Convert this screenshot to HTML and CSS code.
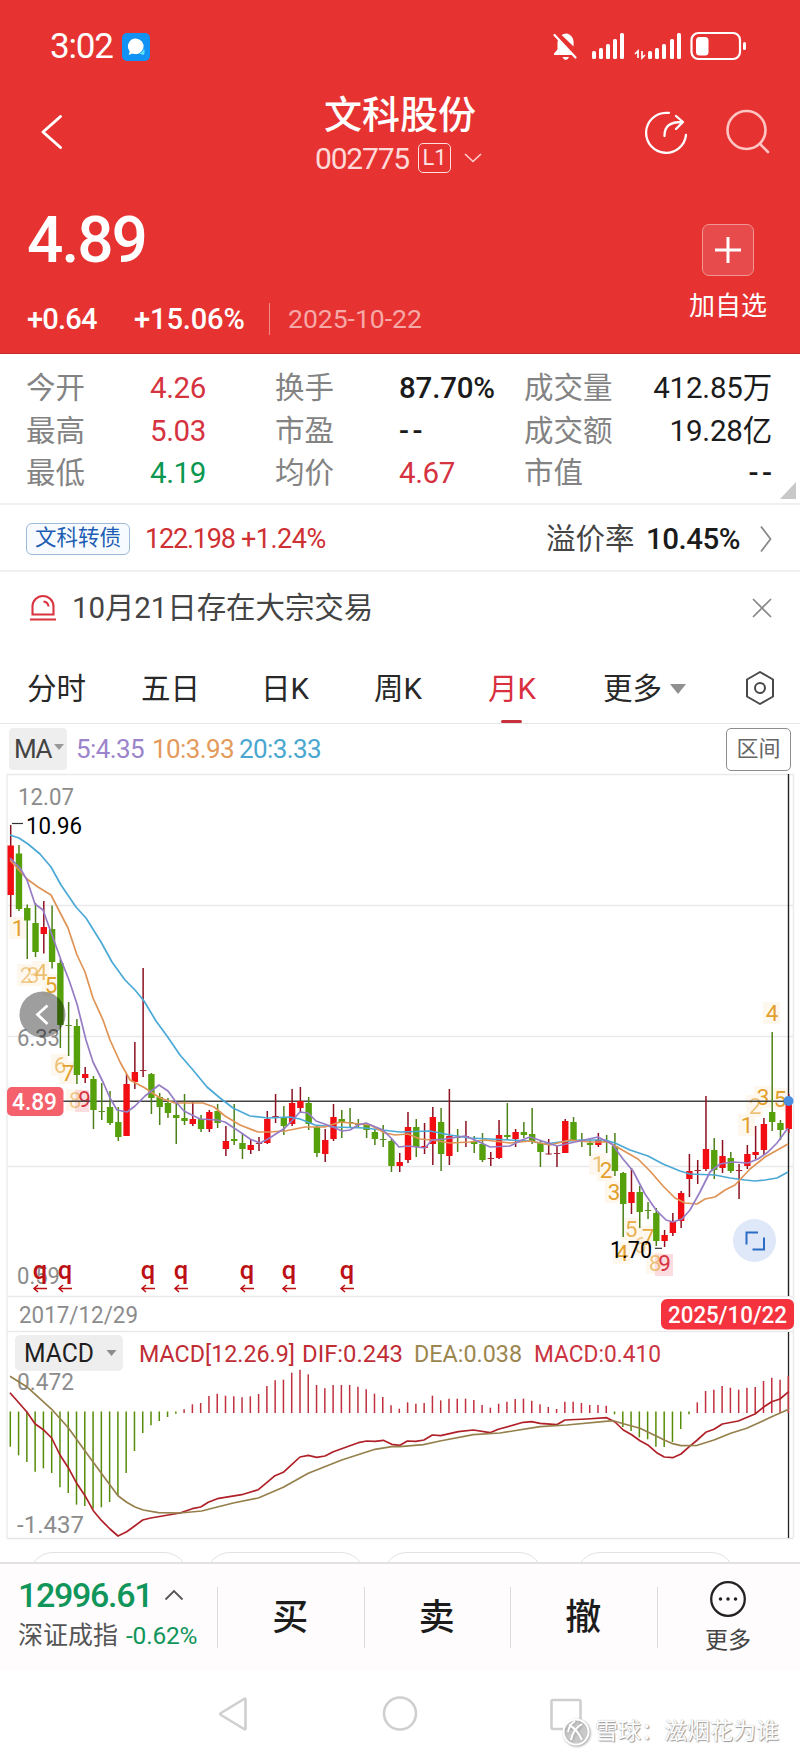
FILE: index.html
```html
<!DOCTYPE html>
<html lang="zh-CN">
<head>
<meta charset="utf-8">
<title>文科股份 002775</title>
<link rel="stylesheet" href="styles.css">
</head>
<body>
<header class="hero">
  <div class="status">
    <span class="clock">3:02</span>
    <svg class="msg" width="28" height="28" viewBox="0 0 28 28"><rect width="28" height="28" rx="5" fill="#1292f5"/><path d="M14 5.500a8 7.800 0 1 1-3.500 15l-3.800 1.500 1-3.800A8 7.800 0 0 1 14 5.500z" fill="#fff"/><path d="M17 20.500q4-1 5-5 1.500 4-.5 6.500z" fill="#5fe0f4"/></svg>
    <svg class="sysicons" width="200" height="32" viewBox="550 30 200 32" fill="#fff">
      <path d="M566 33.500c5 .6 7.600 4.500 7.600 9v4l-12-11.500a9 9 0 0 1 4.400-1.500zM558 39.500l16.500 15.500H554v-1.500l3.500-4v-7zM562.500 57h6.500q-1 3-3.200 3t-3.300-3z"/>
      <path d="M554.500 35l21 22.500" stroke="#fff" stroke-width="2.200" stroke-linecap="round"/>
      <g><rect x="592" y="51" width="4" height="8" rx="1.500"/><rect x="599" y="48" width="4" height="11" rx="1.500"/><rect x="606" y="44" width="4" height="15" rx="1.500"/><rect x="613" y="39" width="4" height="20" rx="1.500"/><rect x="620" y="33" width="4" height="26" rx="1.500"/></g>
      <path d="M638 58v-7l-3 3M642 51v7l3-3" fill="none" stroke="#fff" stroke-width="1.700"/>
      <g><rect x="648" y="51" width="4" height="8" rx="1.500"/><rect x="655" y="48" width="4" height="11" rx="1.500"/><rect x="662" y="44" width="4" height="15" rx="1.500"/><rect x="670" y="39" width="4" height="20" rx="1.500"/><rect x="677" y="33" width="4" height="26" rx="1.500"/></g>
      <rect x="691.500" y="33" width="48.500" height="26" rx="7" fill="none" stroke="#fff" stroke-width="2.200"/>
      <rect x="696" y="37" width="12.500" height="18.500" rx="3.500"/><rect x="743" y="42" width="3" height="8" rx="1.500"/>
    </svg>
  </div>
  <div class="titlebar">
    <svg width="30" height="40" viewBox="0 0 30 40" class="back"><path d="M22.500 4.500L5 20l17.500 15.500" /></svg>
    <div class="name">
      <h1>文科股份</h1>
      <div class="code"><span>002775</span><b>L1</b><svg width="20" height="12" viewBox="0 0 20 12"><path d="M2 2l8 7.500L18 2"/></svg></div>
    </div>
    <svg class="share" width="46" height="46" viewBox="643 109 46 46"><path d="M669 112.800h-3a20 20 0 1 0 20 22"/><path d="M664.500 136c0-10 5-14 18-14M676 116l7 6-7 7"/></svg>
    <svg class="search" width="46" height="46" viewBox="725 109 46 46"><circle cx="746.500" cy="130" r="19"/><path d="M760 144l8 8"/></svg>
  </div>
  <div class="quote">
    <div class="nums">
      <div class="price">4.89</div>
      <div class="change"><span class="c1">+0.64</span><span class="c2">+15.06%</span><span class="date">2025-10-22</span></div>
    </div>
    <div class="add"><i><svg width="28" height="28" viewBox="0 0 28 28"><path d="M1 14h26M14 1v26"/></svg></i><span>加自选</span></div>
  </div>
</header>

<section class="stats">
  <span>今开</span><b class="up">4.26</b><span>换手</span><b>87.70%</b><span>成交量</span><b class="r">412.85万</b>
  <span>最高</span><b class="up">5.03</b><span>市盈</span><b class="nil">--</b><span>成交额</span><b class="r">19.28亿</b>
  <span>最低</span><b class="down">4.19</b><span>均价</span><b class="up">4.67</b><span>市值</span><b class="r nil">--</b>
  <i class="corner"></i>
</section>

<section class="bond">
  <span class="tag">文科转债</span><span class="bp">122.198</span><span class="bc">+1.24%</span>
  <span class="prem">溢价率</span><b>10.45%</b>
  <svg width="14" height="30" viewBox="0 0 14 30"><path d="M2 2.500L11.500 15 2 27.500"/></svg>
</section>

<section class="notice">
  <svg width="28" height="28" viewBox="0 0 28 28" fill="none" stroke="#d9343f" stroke-width="2.100"><path d="M3.500 20.500V12.500a10.500 10.500 0 0 1 21 0v8zM1 25.500h26M14.500 7.500q4.500.5 5 5"/></svg>
  <span>10月21日存在大宗交易</span>
  <svg class="x" width="22" height="22" viewBox="0 0 22 22"><path d="M2 2l18 18M20 2L2 20"/></svg>
</section>

<nav class="tabs">
  <span>分时</span><span>五日</span><span>日K</span><span>周K</span><span class="on">月K</span><span class="more">更多<i></i></span>
  <svg width="32" height="36" viewBox="0 0 32 36"><path d="M16 2l13 7.500v17L16 34 3 26.500v-17z"/><circle cx="16" cy="18" r="5"/></svg>
</nav>

<section class="ma">
  <span class="sel">MA<i></i></span><span class="m5">5:4.35</span><span class="m10">10:3.93</span><span class="m20">20:3.33</span><span class="range">区间</span>
</section>

<svg id="kline" class="chart" width="800" height="558" viewBox="0 774 800 558"></svg>
<svg id="macd" class="chart" width="800" height="212" viewBox="0 1332 800 212"></svg>

<div class="chips"><i></i><i></i><i></i><i></i></div>

<footer class="trade">
  <div class="index">
    <div class="iv">12996.61<svg width="20" height="12" viewBox="0 0 20 12"><path d="M1.500 10.500L10 2l8.500 8.500"/></svg></div>
    <div class="in">深证成指<span>-0.62%</span></div>
  </div>
  <div class="act">买</div><div class="act">卖</div><div class="act">撤</div>
  <div class="act other"><svg width="38" height="38" viewBox="0 0 38 38"><circle cx="19" cy="19" r="16.800"/><path d="M11.500 19h.01M19 19h.01M26.500 19h.01"/></svg><span>更多</span></div>
</footer>

<div class="sysnav">
  <svg width="400" height="44" viewBox="200 1692 400 44"><path d="M245.500 1699.500v29q0 1.500-1.500.5l-23-14q-1.500-1 0-2l23-14q1.500-1 1.500.5z"/><circle cx="400" cy="1713.500" r="16"/><rect x="551.500" y="1700" width="29" height="29" rx="1.500"/></svg>
  <div class="mark"><svg width="28" height="28" viewBox="0 0 28 28"><circle cx="14" cy="14" r="12.500"/><path d="M7 7q8 4 13 15M20 6q-9 5-11 16M13 3q-6 4-7 11"/></svg><span>雪球：滋烟花为谁</span></div>
</div>
<script src="chart.js"></script>
</body>
</html>
```
FILE: styles.css
```css
* { box-sizing: border-box; }
body { margin: 0; width: 800px; height: 1758px; overflow: hidden; background: #fff; color: #222; font-family: Roboto, "Noto Sans CJK SC", sans-serif; }
h1, b, i { margin: 0; font-weight: 400; font-style: normal; }
svg { display: block; flex: none; fill: none; }

.hero { height: 354px; background: #e63332; color: #fff; border-bottom: 1px solid #c22a2d; }
.status { display: flex; align-items: center; height: 92px; padding: 0 50px 0 50px; }
.clock { font-size: 35px; line-height: 40px; letter-spacing: -1.2px; width: 72px; padding-top: 2px; }
.msg { margin-top: 1px; }
.sysicons { margin-left: auto; fill: #fff; }
.titlebar { display: flex; height: 90px; padding-left: 38px; }
.back { margin-top: 20px; stroke: #fff; stroke-width: 3; stroke-linecap: round; stroke-linejoin: round; }
.name { margin-left: 247px; width: 200px; padding-top: 2px; }
h1 { margin-left: 9px; font-size: 38px; line-height: 42px; font-weight: 500; }
.code { display: flex; align-items: center; height: 44px; color: #ffd9d8; font-size: 30px; letter-spacing: -1.200px; }
.code span { width: 103px; line-height: 36px; padding-top: 1px; }
.code b { width: 33px; height: 30px; border: 1.500px solid #ffdedd; border-radius: 5px; font-size: 22px; line-height: 28px; text-align: center; color: #ffe5e4; letter-spacing: 0; }
.code svg { margin-left: 12px; stroke: #ffd0cf; stroke-width: 1.600; }
.share { margin: 17px 0 0 128px; stroke: #fff; stroke-width: 2.300; stroke-linecap: round; stroke-linejoin: round; }
.search { margin: 17px 0 0 36px; stroke: #ffc5c3; stroke-width: 2.600; stroke-linecap: round; }
.quote { display: flex; height: 171px; padding-left: 27px; }
.nums { width: 653px; }
.price { height: 114px; font-size: 64px; line-height: 117px; font-weight: 500; letter-spacing: -2px; }
.change { display: flex; align-items: center; height: 45px; font-size: 29px; letter-spacing: -.4px; }
.c1 { width: 107px; font-weight: 500; letter-spacing: -.8px; }
.c2 { width: 136px; height: 32px; line-height: 33px; border-right: 1.500px solid #f08a88; letter-spacing: -.1px; font-weight: 500; }
.date { margin-left: 18px; color: #f7a9a7; font-size: 26.500px; letter-spacing: 0; }
.add { width: 96px; display: flex; flex-direction: column; align-items: center; padding-top: 42px; }
.add i { width: 52px; height: 52px; border: 1.500px solid #f29593; border-radius: 7px; background: #e84b4b; display: grid; place-items: center; }
.add svg { stroke: #fff; stroke-width: 3; }
.add span { font-size: 26px; line-height: 36px; margin-top: 12px; }

.stats { position: relative; height: 151px; display: grid; grid-template-columns: 124px 125px 124px 125px 100px 148px; grid-auto-rows: 42.700px; padding: 13px 27px 0 26px; line-height: 42.700px; font-size: 29.500px; border-bottom: 2px solid #eeeff1; }
.stats span { color: #838383; white-space: nowrap; }
.stats b { color: #1b1b1b; letter-spacing: -.2px; white-space: nowrap; font-weight: 500; }
.stats .up { color: #d5333f; font-weight: 400; letter-spacing: -.4px; }
.stats .down { color: #0a9750; font-weight: 400; letter-spacing: -.4px; }
.stats .r { text-align: right; font-weight: 400; }
.stats .nil { letter-spacing: 3.500px; font-weight: 500; }
.stats .r.nil { margin-right: -3.500px; }
.corner { position: absolute; right: 4px; bottom: 4px; border-left: 16px solid transparent; border-bottom: 17px solid #c8c8c8; }

.bond { display: flex; align-items: center; height: 67px; padding: 3px 27px 0 26px; border-bottom: 2px solid #f0f0f2; }
.tag { width: 104px; height: 32px; border: 1.500px solid #9db9d8; border-radius: 6px; background: #f7fbff; color: #1d5eb4; font-size: 21.500px; line-height: 28px; text-align: center; }
.bp, .bc { color: #cf3033; font-size: 27px; letter-spacing: -1.200px; }
.bp { width: 96px; margin-left: 15px; }
.bc { letter-spacing: -.5px; }
.prem { margin-left: auto; width: 100px; color: #444; font-size: 29.500px; line-height: 40px; }
.bond b { width: 113px; font-size: 29.500px; letter-spacing: -.5px; color: #1b1b1b; font-weight: 500; }
.bond svg { stroke: #8a8a8a; stroke-width: 1.800; }

.notice { display: flex; align-items: center; height: 71px; padding: 0 27px 0 29px; color: #444; font-size: 29.500px; line-height: 40px; }
.notice span { margin-left: 15px; letter-spacing: -.1px; }
.x { margin-left: auto; stroke: #888; stroke-width: 1.700; }

.tabs { height: 81px; display: grid; grid-template-columns: 114px 120px 113px 114px 115px 141px 40px; padding: 15px 0 0 27px; font-size: 29.500px; line-height: 62px; border-bottom: 1.500px solid #e6e6e6; color: #282828; }
.on { color: #d92f3f; position: relative; }
.on::after { content: ""; position: absolute; left: 13px; bottom: 0; width: 21px; height: 3px; border-radius: 2px; background: #c9303d; }
.more i { display: inline-block; margin: 0 0 5px 8px; border: 8px solid transparent; border-top: 10px solid #909090; border-bottom: 0; }
.tabs svg { margin-top: 12px; stroke: #484848; stroke-width: 2; stroke-linejoin: round; }

.ma { height: 50px; display: flex; align-items: center; padding: 0 9px 0 9px; font-size: 26px; letter-spacing: -.6px; }
.sel { width: 58px; height: 42px; padding-left: 5px; background: #eee; border-radius: 4px; color: #444; line-height: 43px; white-space: nowrap; letter-spacing: -1.500px; }
.sel i { display: inline-block; margin: 0 0 8px 3px; border: 5px solid transparent; border-top: 6px solid #999; border-bottom: 0; }
.m5 { width: 76px; margin-left: 9px; color: #9b84cb; letter-spacing: -.6px; }
.m10 { width: 87px; color: #e49a5b; }
.m20 { color: #49a7cf; }
.range { margin-left: auto; width: 65px; height: 43px; border: 1.500px solid #8d8d8d; border-radius: 5px; text-align: center; line-height: 40px; font-size: 22px; color: #666; letter-spacing: 0; }
.chart { overflow: visible; }

.chips { height: 18px; padding: 8px 64px 0 29px; display: grid; grid-template-columns: 159px 159px 160px 159px; column-gap: 18px; overflow: hidden; }
.chips i { height: 48px; border: 1.500px solid #e1e2e5; border-radius: 24px; }
.chips i:last-child { margin-left: 15px; margin-right: -15px; }

.trade { height: 108px; display: flex; background: #fefcfd; border-top: 2px solid #e2e2e4; }
.index { width: 217px; padding: 9px 0 0 18px; }
.iv { display: flex; align-items: center; gap: 12px; height: 44px; font-size: 34px; font-weight: 500; letter-spacing: -1.300px; color: #10955a; }
.iv svg { stroke: #555; stroke-width: 1.800; }
.in { display: flex; align-items: center; font-size: 25px; line-height: 36px; color: #555; margin-top: 1px; white-space: nowrap; }
.in span { margin-left: 8px; font-size: 24.500px; letter-spacing: -.2px; color: #10955a; }
.act { position: relative; width: 146.500px; height: 104px; text-align: center; font-size: 36px; font-weight: 500; line-height: 108px; color: #1c1c1c; }
.act::before { content: ""; position: absolute; left: 0; top: 23px; height: 61px; border-left: 1.500px solid #dcdcde; }
.other { width: 143px; display: flex; flex-direction: column; align-items: center; padding-top: 16px; font-size: 23px; line-height: 36px; font-weight: 400; color: #444; }
.other svg { stroke: #222; stroke-width: 2.300; }
.other path { stroke-width: 3.500; stroke-linecap: round; }
.other span { margin-top: 5px; }

.sysnav { position: relative; height: 86px; padding: 20px 0 0 200px; margin-top: 2px; }
.sysnav > svg { stroke: #cfcfcf; stroke-width: 2.600; }
.mark { position: absolute; left: 562px; top: 44px; display: flex; align-items: center; gap: 5px; color: #fff; font-size: 23px; line-height: 32px; white-space: nowrap; text-shadow: 1px 1px 1px #999, 0 0 1px #aaa; }
.mark svg { stroke: #fff; stroke-width: 2; filter: drop-shadow(1px 1px 1px #999); fill: rgba(190,190,190,.45); }
```
FILE: chart.js
```js
const NS = 'http://www.w3.org/2000/svg';
const px = i => 10.7 + 8.277 * i;

function add(parent, tag, attrs, text) {
  const e = document.createElementNS(NS, tag);
  for (const k in attrs) e.setAttribute(k, attrs[k]);
  if (text !== undefined) e.textContent = text;
  parent.appendChild(e);
  return e;
}
const line = (p, x1, y1, x2, y2, c, w = 1.5) => add(p, 'path', { d: `M${x1} ${y1}L${x2} ${y2}`, stroke: c, 'stroke-width': w });
const rect = (p, x, y, w, h, c, r = 0) => add(p, 'rect', { x, y, width: w, height: h, fill: c, rx: r });
const label = (p, s, x, y, w, c, size = 23.5, weight = 400) =>
  add(p, 'text', { x, y, fill: c, 'font-size': size, 'font-weight': weight, textLength: w, lengthAdjust: 'spacingAndGlyphs' }, s);
const curve = (p, pts, c) => add(p, 'polyline', { points: pts, stroke: c, 'stroke-width': 1.7, 'stroke-linejoin': 'round' });

/* colour, high, body top, body bottom, low */
const candles = `r 825 845.5 895 917|g 845 853.5 909 911|g 904.5 908 920.5 959|g 903 923 952 957|r 901 927 934 953.5|g 905.5 929 962 968.5|g 959 963 1025 1048|g 1002 1025 1026 1056|g 1019 1026 1075 1084|r 1067 1074 1078 1083|g 1076 1079 1110 1129|g 1083 1111 1112 1120|g 1091 1107 1123 1125|g 1107 1122 1137 1141|r 1074 1084 1136 1136|r 1042 1072 1082 1089|r 968 1070 1071 1077|g 1073 1074 1098 1114|g 1093 1097 1107 1125|g 1098 1103 1113 1118|g 1103 1115 1118 1144|g 1094 1118 1121 1125|r 1102 1119 1124 1126|g 1115 1119 1129 1132|r 1110 1112 1129 1132|g 1104 1111 1123 1128|r 1126 1141 1149 1156|g 1104 1139 1141 1145|g 1133 1143 1149 1159|r 1140 1145 1150 1154|r 1137 1143 1144 1151|r 1111 1119 1143 1144|r 1094 1116 1117 1123|g 1106 1117 1126 1135|r 1089 1103 1124 1126|r 1087 1101 1108 1112|g 1097 1103 1124 1130|g 1125 1127 1153 1157|r 1129 1140 1154 1162|r 1104 1117 1139 1141|g 1110 1119 1122 1138|g 1108 1122 1123 1127|g 1119 1124 1125 1128|g 1124 1125 1130 1138|g 1129 1132 1139 1145|g 1125 1139 1140 1147|g 1139 1141 1166 1172|r 1153 1162 1166 1172|r 1112 1127 1160 1163|g 1119 1127 1147 1157|r 1123 1146 1148 1154|r 1107 1117 1144 1165|g 1108 1122 1154 1171|r 1089 1136 1156 1165|g 1129 1137 1138 1152|r 1121 1136 1137 1147|g 1136 1142 1144 1153|g 1133 1144 1160 1162|r 1152 1158 1159 1166|r 1120 1135 1158 1159|g 1103 1135 1137 1140|r 1129 1132 1139 1147|g 1122 1132 1135 1138|g 1108 1134 1142 1144|g 1141 1143 1152 1167|r 1139 1153.5 1154.5 1154.5|r 1146 1153 1154 1167|r 1119 1121 1153 1153|g 1117 1122 1140 1141|g 1133 1140 1141 1147|g 1140 1143 1145 1156|r 1133 1140 1145 1147|g 1135 1141 1142 1153|g 1133 1146 1171 1176|g 1172 1173 1204 1237|r 1168 1192 1203 1214|g 1186 1192 1212 1228|g 1202 1210 1211 1219|g 1208 1213 1241 1246|r 1230 1235 1241 1247|r 1213 1222 1233 1236|r 1191 1193 1221 1228|r 1154 1171 1179 1197|r 1160 1170 1171 1184|r 1096 1149 1169 1171|g 1138 1150 1170 1179|r 1140 1156 1168 1173|g 1152 1158 1171 1173|r 1164 1170 1171 1199|r 1145 1154 1166 1169|r 1126 1152 1155 1159|r 1118 1124 1150 1155|g 1032 1112 1122 1131|g 1120 1123 1130 1140|r 1094 1101 1129 1133`.split('|').map(s => s.split(' '));

const ma20 = '10,835 19,838 28,844 40,854 51,867 61,885 76,907 86,918 101,942 112,962 125,980 135,990 144,1001 156,1021 167,1036 180,1055 193,1070 207,1087 220,1098 233,1108 250,1116 268,1118 290,1117 300,1119 315,1125 335,1127 365,1128 382,1130 400,1132 430,1131 450,1135 470,1138 490,1139 510,1140 530,1141 545,1144 560,1142 580,1140 605,1140 615,1143 630,1150 648,1156 663,1164 680,1171 690,1174 715,1175 730,1178 745,1180 755,1181 765,1180 777,1178 788,1172';
const ma10 = '10,860 27,879 38,887 51,895 68,928 77,955 85,972 93,998 103,1020 110,1040 120,1062 130,1080 145,1088 160,1098 175,1103 203,1103 214,1107 225,1116 240,1125 258,1132 268,1132 285,1131 305,1127 325,1127 340,1122 360,1124 370,1125 385,1133 395,1135 408,1134 420,1139 432,1140 450,1143 470,1142 485,1140 510,1143 530,1141 550,1145 570,1140 590,1142 608,1142 617,1147 638,1159 650,1171 663,1186 675,1198 685,1203 697,1204 705,1199 715,1197 725,1190 735,1185 750,1169 765,1157 788,1144';
const ma5 = '10,858 20,868 27,880 35,904 43,910 52,935 61,960 69,980 77,1004 86,1040 93,1062 103,1082 110,1098 117,1110 127,1112 135,1106 145,1096 159,1085 168,1091 176,1102 184,1111 200,1119 217,1120 225,1122 243,1134 250,1139 260,1143 268,1139 285,1128 300,1112 308,1113 316,1121 333,1127 342,1131 350,1130 358,1125 366,1123 383,1130 392,1139 399,1147 408,1146 425,1148 432,1140 445,1139 465,1136 475,1140 490,1147 510,1146 522,1140 530,1137 545,1142 557,1146 575,1142 598,1137 612,1144 623,1159 633,1171 645,1194 656,1210 666,1220 673,1222 682,1219 690,1210 700,1192 710,1172 720,1164 732,1162 748,1163 758,1159 768,1152 777,1143 788,1128';

const k = document.getElementById('kline');
for (const y of [774.5, 905.5, 1036.5, 1166.5, 1296.5]) line(k, 7, y, 793, y, '#e9e9eb');
line(k, 7, 774, 7, 1538, '#ececef');
line(k, 793.5, 774, 793.5, 1538, '#ececef');
label(k, '12.07', 18, 805, 56, '#8c8c8c');
label(k, '6.33', 17, 1046, 43, '#8c8c8c');
label(k, '0.59', 17, 1284, 43, '#8c8c8c');

/* sequence counters: digit, centre x, baseline, opacity */
const counts = [[1, 18, 936, 1], [2, 26, 983, .5], [3, 33, 983, .5], [4, 41, 980, .65], [5, 51, 993, 1], [6, 60, 1073, .6], [7, 68, 1081, 1], [8, 75, 1108, .5], [1, 598, 1172, .65], [2, 606, 1178, 1], [3, 614, 1200, 1], [4, 622, 1261, 1], [5, 631, 1237, .8], [6, 640, 1253, .5], [7, 648, 1245, .9], [8, 655, 1271, .6], [1, 747, 1133, 1], [2, 755, 1114, .6], [3, 763, 1105, 1], [4, 772, 1021, 1], [5, 780, 1107, 1]];
for (const [, x, y] of counts) rect(k, x - 9, y - 19, 17, 22, '#fef7ee');
rect(k, 75, 1090, 14, 22, '#fbdcdf');
rect(k, 655, 1254, 18, 22, '#fbdcdf');
for (const [n, x, y, o] of counts) add(k, 'text', { x, y, fill: '#e3a02c', 'font-size': 22.5, 'text-anchor': 'middle', opacity: o }, n);
for (const [x, y] of [[84.5, 1107], [664.5, 1271]]) add(k, 'text', { x, y, fill: '#d6353f', 'font-size': 22.5, 'text-anchor': 'middle' }, 9);

line(k, 7, 1101.3, 789, 1101.3, '#444', 1.4);
line(k, 788.5, 774, 788.5, 1296, '#222', 1.4);
candles.forEach(([c, h, t, b, l], i) => {
  const x = px(i), flat = b - t < 1.5;
  line(k, x, h, x, l, c === 'r' ? '#8c1020' : '#4c8118', 1.5);
  rect(k, x - 3.2, t, 6.4, Math.max(b - t, 1), flat ? (c === 'r' ? '#a52a35' : '#5b8f2a') : (c === 'r' ? '#f20d12' : '#56a00c'));
});
curve(k, ma20, '#4ba9d6');
curve(k, ma10, '#df9456');
curve(k, ma5, '#967cc5');

line(k, 12, 823.5, 23, 823.5, '#333', 1.2);
label(k, '10.96', 26, 833.5, 56, '#000', 24);
label(k, '1.70', 610, 1258, 42, '#000', 24);
line(k, 655, 1248.3, 662, 1248.3, '#333', 1.2);
rect(k, 7, 1087, 56.5, 29, '#f4606c', 5);
label(k, '4.89', 12, 1110, 45, '#fff', 24, 500);
add(k, 'circle', { cx: 42.5, cy: 1014.5, r: 23, fill: '#000', opacity: .38 });
add(k, 'path', { d: 'M47.500 1005.500l-10 9 10 9.500', stroke: '#fff', 'stroke-width': 2.8 });
for (const x of [40, 65, 148, 181, 247, 289, 347]) {
  add(k, 'text', { x, y: 1279, fill: '#bd1014', 'font-size': 25.5, 'font-weight': 500, 'text-anchor': 'middle' }, 'q');
  add(k, 'path', { d: `M${x + 7} 1288.500h-13M${x - 2} 1285l-4 3.500 4 3.500`, stroke: '#bd1014', 'stroke-width': 1.5 });
}
add(k, 'circle', { cx: 788.5, cy: 1101, r: 5, fill: '#4a8fdf' });
add(k, 'circle', { cx: 754.5, cy: 1240.500, r: 21.5, fill: '#dee8f9' });
add(k, 'path', { d: 'M746.500 1244.500v-12h11.500M752.500 1249.500h11.500v-12', stroke: '#2c6cc4', 'stroke-width': 2 });

label(k, '2017/12/29', 19, 1323, 119, '#8c8c8c');
rect(k, 661, 1299, 133, 30.5, '#f5333f', 6);
label(k, '2025/10/22', 668, 1323, 119, '#fff', 24, 500);

const ends = [380, 406, 426, 455, 445, 459, 502, 519, 554, 558, 566, 562, 546, 525, 459, 393, 339, 316, 303, 291, 281, 268, 253, 249, 228, 221, 227, 229, 232, 229, 222, 198, 181, 179, 158, 149, 163, 195, 205, 195, 195, 195, 200, 208, 221, 231, 256, 266, 247, 251, 249, 227, 241, 236, 236, 236, 240, 255, 263, 251, 245, 237, 236, 242, 253, 261, 267, 245, 245, 249, 255, 255, 257, 283, 321, 333, 352, 358, 380, 381, 366, 327, 283, 247, 213, 209, 198, 203, 209, 203, 201, 183, 173, 179, 168];
const dif = '30,218 80,275 105,311 130,329 155,354 180,405 205,443 230,490 255,527 280,572 305,602 330,627 354,648 380,635 405,617 428,600 452,594 540,579 577,566 602,561 625,547 652,536 725,524 775,509 800,488 825,467 850,457 875,434 900,411 925,406 950,412 975,408 1000,395 1075,368 1100,363 1125,364 1150,361 1175,373 1200,376 1222,363 1247,364 1272,360 1297,345 1322,347 1375,335 1420,330 1470,338 1495,328 1570,307 1595,305 1620,310 1670,314 1695,300 1760,297 1820,293 1845,306 1870,330 1895,344 1920,362 1945,376 1970,398 1993,411 2018,413 2043,402 2068,380 2092,360 2117,337 2142,328 2167,312 2215,303 2265,282 2290,262 2315,245 2340,237 2366,215';
const dea = '30,169 80,200 155,268 205,323 255,393 330,495 354,527 380,547 405,561 430,570 475,578 540,579 605,573 655,560 700,549 775,534 850,502 925,460 1025,420 1125,388 1175,380 1200,380 1270,374 1320,363 1420,344 1500,339 1620,320 1700,315 1840,302 1870,311 1920,325 1945,337 1970,349 1993,360 2018,371 2043,377 2092,376 2142,360 2192,340 2240,325 2290,302 2315,290 2366,268';
const third = s => s.split(' ').map(p => { const [x, y] = p.split(',').map(Number); return (x / 3).toFixed(1) + ',' + (1320 + y / 3).toFixed(1); }).join(' ');

const m = document.getElementById('macd');
line(m, 7, 1331.500, 793, 1331.500, '#e9e9eb');
line(m, 7, 1538.500, 793, 1538.500, '#e4e4e6');
rect(m, 15, 1335, 108, 36, '#eeeeef', 5);
label(m, 'MACD', 24, 1362, 70, '#1f1f1f', 25, 400);
add(m, 'path', { d: 'M106.500 1350h10l-5 6z', fill: '#8c8c8c' });
label(m, 'MACD[12.26.9]', 139, 1362, 156, '#c02d35', 24);
label(m, 'DIF:0.243', 302, 1362, 101, '#c02d35', 24);
label(m, 'DEA:0.038', 414, 1362, 108, '#9c864f', 24);
label(m, 'MACD:0.410', 534, 1362, 127, '#ca3340', 24);
label(m, '0.472', 17, 1390, 57, '#8c8c8c');
label(m, '-1.437', 17, 1533, 67, '#8c8c8c');
line(m, 788.5, 1332, 788.5, 1538, '#222', 1.3);
ends.forEach((e, i) => {
  const y = 1320 + e / 3, up = e < 275, x = px(i) - .4;
  line(m, x, up ? 1413 : 1411.5, x, y, up ? '#c0303d' : '#568d08', 1.5);
});
curve(m, third(dif), '#b02028');
curve(m, third(dea), '#95804c');
```
